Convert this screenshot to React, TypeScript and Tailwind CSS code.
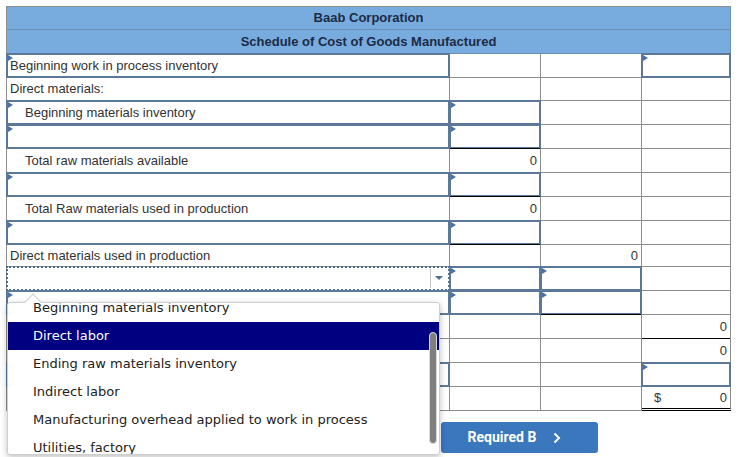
import React from "react";

type Cell = {
  kind?: "plain" | "input" | "select";
  text?: string;
  indent?: boolean;
  num?: string;
  dollar?: boolean;
  topBlack?: boolean;
  dbl?: boolean;
};

type Row = { h: number; cells: Cell[] };

const P: Cell = { kind: "plain" };
const I: Cell = { kind: "input" };

const rows: Row[] = [
  { h: 24, cells: [{ kind: "input", text: "Beginning work in process inventory" }, P, P, I] },
  { h: 23, cells: [{ kind: "plain", text: "Direct materials:" }, P, P, P] },
  { h: 24, cells: [{ kind: "input", text: "Beginning materials inventory", indent: true }, I, P, P] },
  { h: 24, cells: [I, I, P, P] },
  { h: 24, cells: [{ kind: "plain", text: "Total raw materials available", indent: true }, { kind: "plain", num: "0", topBlack: true }, P, P] },
  { h: 24, cells: [I, I, P, P] },
  { h: 24, cells: [{ kind: "plain", text: "Total Raw materials used in production", indent: true }, { kind: "plain", num: "0", topBlack: true }, P, P] },
  { h: 24, cells: [I, I, P, P] },
  { h: 22, cells: [{ kind: "plain", text: "Direct materials used in production" }, { kind: "plain", topBlack: true }, { kind: "plain", num: "0" }, P] },
  { h: 24, cells: [{ kind: "select" }, I, I, P] },
  { h: 24, cells: [I, I, I, P] },
  { h: 24, cells: [P, P, { kind: "plain", topBlack: true }, { kind: "plain", num: "0" }] },
  { h: 24, cells: [P, P, P, { kind: "plain", num: "0", topBlack: true }] },
  { h: 24, cells: [I, P, P, I] },
  { h: 24, cells: [P, P, P, { kind: "plain", num: "0", dollar: true, dbl: true }] },
];

function Tri() {
  return (
    <span className="absolute left-[1px] top-[1px] w-0 h-0 border-t-[3px] border-b-[3px] border-l-[5px] border-t-transparent border-b-transparent border-l-[#4a72a8]" />
  );
}

function CellView({ c, h }: { c: Cell; h: number }) {
  const kind = c.kind ?? "plain";
  return (
    <div
      className={`relative border-r border-b border-[#8d8d8d] flex items-center ${c.dbl ? "border-b-[3px] border-b-black border-double" : ""}`}
      style={{ height: h }}
    >
      {c.topBlack && <span className="absolute left-0 right-0 -top-px h-px bg-black" />}
      {kind === "input" && (
        <>
          <span className="absolute -left-px -top-px -right-px -bottom-px border-2 border-[#5b7898]" />
          <Tri />
        </>
      )}
      {kind === "select" && (
        <>
          <span className="absolute -left-px -top-px -right-px -bottom-px border-2 border-dotted border-[#4b6f94]" />
          <span className="absolute right-[18px] top-[2px] bottom-[2px] w-px bg-[#c6c6c6]" />
          <span className="absolute right-[6px] top-[9px] w-0 h-0 border-l-[4px] border-r-[4px] border-t-[4px] border-l-transparent border-r-transparent border-t-[#4a6d92]" />
        </>
      )}
      {c.text && (
        <span className={`text-[13px] text-[#333] whitespace-nowrap ${c.indent ? "pl-[18px]" : "pl-[3px]"}`}>
          {c.text}
        </span>
      )}
      {c.num && (
        <div className="flex w-full items-center justify-between pr-[3px] text-[13px] text-[#333]">
          <span className={c.dollar ? "pl-[12px]" : ""}>{c.dollar ? "$" : ""}</span>
          <span>{c.num}</span>
        </div>
      )}
    </div>
  );
}

const options = [
  "Beginning materials inventory",
  "Direct labor",
  "Ending raw materials inventory",
  "Indirect labor",
  "Manufacturing overhead applied to work in process",
  "Utilities, factory",
];

export default function App() {
  return (
    <div className="relative w-[750px] h-[457px] bg-white overflow-hidden" style={{ fontFamily: '"Liberation Sans", Arial, sans-serif' }}>
      <div className="pt-[6px] pl-[6px] flex flex-col">
        <div className="w-[725px] border-l border-t border-[#8d8d8d]">
          <div className="h-[23px] bg-[#78acdf] border-r border-b border-[#6c8fb3] flex items-center justify-center text-[13px] font-bold text-[#1c2b45]">
            Baab Corporation
          </div>
          <div className="h-[24px] bg-[#78acdf] border-r border-b border-[#6c8fb3] flex items-center justify-center text-[13px] font-bold text-[#1c2b45]">
            Schedule of Cost of Goods Manufactured
          </div>
          <div className="grid grid-cols-[443px_91px_101px_89px]">
            {rows.map((r, ri) =>
              r.cells.map((c, ci) => <CellView key={`${ri}-${ci}`} c={c} h={r.h} />)
            )}
          </div>
        </div>
        <div className="mt-[11px] pl-[435px] flex">
          <button className="w-[157px] h-[31px] bg-[#3a77bd] rounded-[3px] flex items-center justify-center gap-[17px] text-white text-[14px] font-bold pr-[10px]" style={{ fontFamily: 'Roboto, "Liberation Sans", sans-serif' }}>
            <span>Required B</span>
            <svg width="8" height="12" viewBox="0 0 8 12" fill="none">
              <path d="M1.5 1.5L6 6L1.5 10.5" stroke="white" strokeWidth="2" />
            </svg>
          </button>
        </div>
      </div>

      {/* dropdown popup */}
      <div className="absolute left-[7px] top-[302px] w-[433px] h-[153px] bg-white border border-[#cfcfcf] rounded-[3px] shadow-[0_2px_6px_rgba(0,0,0,0.25)]">
        <span className="absolute left-[19px] -top-[7px] w-[12px] h-[12px] rotate-45 bg-white border-l border-t border-[#cfcfcf]" />
        <div className="relative h-full overflow-hidden rounded-[3px]">
          <div className="-mt-[9px] flex flex-col">
            {options.map((o) => (
              <div
                key={o}
                className={`h-[28px] flex items-center pl-[25px] text-[13px] whitespace-nowrap ${o === "Direct labor" ? "bg-[#000080] text-white" : "text-[#222]"}`}
                style={{ fontFamily: '"DejaVu Sans", Verdana, sans-serif' }}
              >
                {o}
              </div>
            ))}
          </div>
          <span className="absolute right-[2px] top-[29px] w-[8px] h-[112px] rounded-full bg-[#7f7f7f] border border-[#d8d8d8]" />
        </div>
      </div>
    </div>
  );
}
